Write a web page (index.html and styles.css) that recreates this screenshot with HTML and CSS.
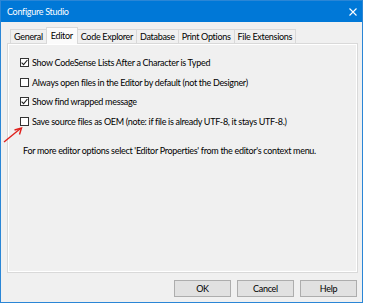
FILE: index.html
```html
<!DOCTYPE html>
<html lang="en">
<head>
  <meta charset="UTF-8" />
  <title>Configure Studio</title>
  <link rel="stylesheet" href="styles.css">
</head>
<body>
  <div class="window">
    <div class="titlebar">
      <span class="title">Configure Studio</span>
      <svg class="close" width="8" height="8" viewBox="0 0 8 8">
        <path d="M0.5 0.5 L7.5 7.5 M7.5 0.5 L0.5 7.5" stroke="#fff" stroke-width="1.1" />
      </svg>
    </div>

    <div class="client">
      <div class="tabs">
        <div class="tab">General</div>
        <div class="tab active">Editor</div>
        <div class="tab">Code Explorer</div>
        <div class="tab">Database</div>
        <div class="tab">Print Options</div>
        <div class="tab">File Extensions</div>
      </div>

      <div class="panel">
        <label class="option">
          <span class="box"><svg width="7" height="7" viewBox="0 0 7 7"><path d="M0.6 3.6 L2.6 5.6 L6.4 1" fill="none" stroke="#222" stroke-width="1.1" /></svg></span>
          Show CodeSense Lists After a Character is Typed
        </label>
        <label class="option">
          <span class="box"></span>
          Always open files in the Editor by default (not the Designer)
        </label>
        <label class="option">
          <span class="box"><svg width="7" height="7" viewBox="0 0 7 7"><path d="M0.6 3.6 L2.6 5.6 L6.4 1" fill="none" stroke="#222" stroke-width="1.1" /></svg></span>
          Show find wrapped message
        </label>
        <label class="option">
          <span class="box"></span>
          Save source files as OEM (note: if file is already UTF-8, it stays UTF-8.)
        </label>
        <p class="note">For more editor options select 'Editor Properties' from the editor's context menu.</p>
      </div>

      <div class="buttons">
        <button>OK</button>
        <button>Cancel</button>
        <button>Help</button>
      </div>
    </div>

    <svg class="arrow" width="24" height="24" viewBox="0 0 24 24">
      <path d="M2 20 L18.5 6.5" stroke="#e0201c" stroke-width="1.4" fill="none" />
      <path d="M12.5 8 L19.5 6 L17.5 12.5" stroke="#e0201c" stroke-width="1.4" fill="none" />
    </svg>
  </div>
</body>
</html>
```

FILE: styles.css
```css
* {
  box-sizing: border-box;
  margin: 0;
  padding: 0;
}

body {
  background: #fff;
  font-family: 'Lato', sans-serif;
  font-size: 9px;
  letter-spacing: -0.3px;
  color: #000;
}

.window {
  position: relative;
  width: 363px;
  height: 303px;
  border: 1px solid #2a86d6;
  background: #f0f0f0;
  display: flex;
  flex-direction: column;
}

.titlebar {
  height: 21px;
  background: #0078d7;
  color: #fff;
  display: flex;
  align-items: center;
  justify-content: space-between;
  padding: 0 5px 0 6px;
}

.close {
  margin-top: 1px;
}

.client {
  flex: 1;
  display: flex;
  flex-direction: column;
  padding: 5px 5px 0 6px;
}

.tabs {
  height: 16px;
  display: flex;
  align-items: flex-end;
  padding-left: 3px;
}

.tab {
  height: 14px;
  line-height: 13px;
  padding: 0 3px;
  border: 1px solid #d9d9d9;
  border-bottom: none;
  background: #f0f0f0;
  margin-right: -1px;
  white-space: nowrap;
}

.tab.active {
  height: 17px;
  line-height: 15px;
  padding: 0 4px;
  background: #fbfbfb;
  margin-bottom: -1px;
  position: relative;
  z-index: 1;
}

.panel {
  width: 351px;
  height: 230px;
  border: 1px solid #d9d9d9;
  box-shadow: inset 1px 1px 0 #fff, inset -1px -1px 0 #fff;
  padding: 9px 0 0 12px;
}

.option {
  height: 19.5px;
  display: flex;
  align-items: center;
  white-space: nowrap;
}

.box {
  width: 9px;
  height: 9px;
  border: 1px solid #333;
  background: #fff;
  margin-right: 3px;
  display: flex;
  align-items: center;
  justify-content: center;
}

.note {
  margin: 14px 0 0 3px;
  line-height: 12px;
  white-space: nowrap;
}

.buttons {
  display: flex;
  justify-content: flex-end;
  gap: 6px;
  margin-top: 7px;
}

.buttons button {
  width: 57px;
  height: 17px;
  background: #e1e1e1;
  border: 1px solid #adadad;
  font-family: 'Lato', sans-serif;
  font-size: 9px;
  letter-spacing: -0.3px;
  color: #000;
}

.arrow {
  position: absolute;
  left: 1px;
  top: 121px;
}
```
